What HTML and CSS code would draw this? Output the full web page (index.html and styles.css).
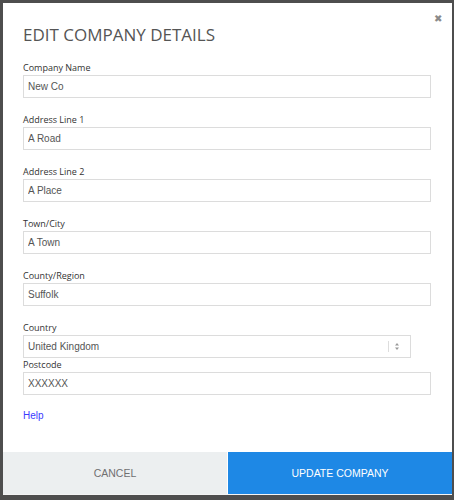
FILE: index.html
```html
<!DOCTYPE html>
<html lang="en">
<head>
<meta charset="utf-8">
<title>Edit Company Details</title>
<link rel="stylesheet" href="styles.css">
</head>
<body>
<div class="modal">
  <button class="close" type="button" aria-label="Close">&#x2716;</button>
  <div class="body">
    <h1 class="title">EDIT COMPANY DETAILS</h1>
    <form class="form">
      <div class="field">
        <label class="label">Company Name</label>
        <input class="input" type="text" value="New Co">
      </div>
      <div class="field">
        <label class="label">Address Line 1</label>
        <input class="input" type="text" value="A Road">
      </div>
      <div class="field">
        <label class="label">Address Line 2</label>
        <input class="input" type="text" value="A Place">
      </div>
      <div class="field">
        <label class="label">Town/City</label>
        <input class="input" type="text" value="A Town">
      </div>
      <div class="field">
        <label class="label">County/Region</label>
        <input class="input" type="text" value="Suffolk">
      </div>
      <div class="field field-tight">
        <label class="label">Country</label>
        <div class="select">
          <span class="select-value">United Kingdom</span>
          <span class="select-arrows">
            <svg width="6" height="9" viewBox="0 0 6 9"><path d="M3 1 L5 3.5 H1 Z M3 8 L5 5.5 H1 Z" fill="#999"/></svg>
          </span>
        </div>
      </div>
      <div class="field">
        <label class="label">Postcode</label>
        <input class="input" type="text" value="XXXXXX">
      </div>
    </form>
    <a class="help" href="#">Help</a>
  </div>
  <div class="footer">
    <button class="btn btn-cancel" type="button">CANCEL</button>
    <button class="btn btn-primary" type="button">UPDATE COMPANY</button>
  </div>
</div>
</body>
</html>
```

FILE: styles.css
```css
html, body {
  margin: 0;
  padding: 0;
}

body {
  background: #4e4e4e;
  padding: 3px 2px 5px 3px;
  box-sizing: border-box;
  height: 500px;
}

.modal {
  position: relative;
  background: #fff;
  height: 492px;
  display: flex;
  flex-direction: column;
  font-family: "Open Sans", sans-serif;
}

.close {
  position: absolute;
  top: 11px;
  right: 10px;
  border: 0;
  background: none;
  padding: 0;
  font-size: 10px;
  color: #8a8a8a;
  cursor: pointer;
  line-height: 1;
}

.body {
  flex: 1;
  padding: 20px 20px 0 20px;
}

.title {
  margin: 0;
  font-size: 17px;
  font-weight: 400;
  color: #555;
  line-height: 24px;
}

.form {
  margin-top: 15px;
  display: flex;
  flex-direction: column;
}

.field {
  display: flex;
  flex-direction: column;
  margin-bottom: 16px;
}

.field:last-child {
  margin-bottom: 0;
}

.field-tight {
  margin-bottom: 1px;
}

.label {
  font-size: 9px;
  color: #333;
  line-height: 12px;
  margin-bottom: 1px;
}

.input,
.select {
  box-sizing: border-box;
  height: 23px;
  border: 1px solid #dcdcdc;
  background: #fff;
  font-family: "Liberation Sans", Arial, sans-serif;
  font-size: 10px;
  color: #555;
  padding: 0 4px;
  margin: 0;
  outline: none;
}

.input {
  width: 408px;
}

.select {
  width: 388px;
  display: flex;
  align-items: center;
}

.select-value {
  flex: 1;
}

.select-arrows {
  display: flex;
  align-items: center;
  border-left: 1px solid #ddd;
  height: 11px;
  padding: 0 6px 0 5px;
}

.help {
  display: inline-block;
  margin-top: 15px;
  font-family: "Liberation Sans", Arial, sans-serif;
  font-size: 10px;
  color: #3b3bff;
  text-decoration: none;
}

.footer {
  display: flex;
  height: 42px;
  gap: 1px;
  border-bottom: 1px solid #f4f4f4;
}

.btn {
  flex: 1;
  border: 0;
  margin: 0;
  font-family: "Liberation Sans", Arial, sans-serif;
  font-size: 10.5px;
  cursor: pointer;
}

.btn-cancel {
  background: #eceff0;
  color: #707070;
}

.btn-primary {
  background: #1e88e5;
  color: #fff;
}
```
